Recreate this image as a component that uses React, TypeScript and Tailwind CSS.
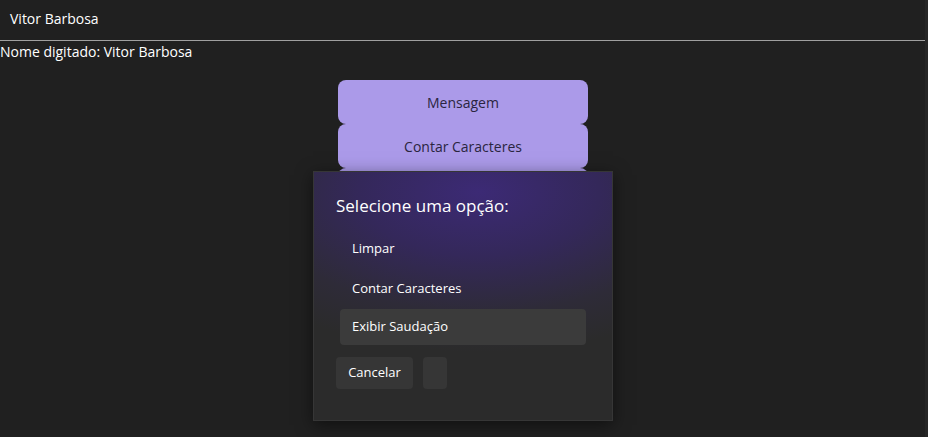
import React from "react";

export default function App() {
  const font = { fontFamily: '"Open Sans", "Noto Sans", sans-serif' };
  return (
    <div className="relative w-[928px] h-[437px] overflow-hidden bg-[#202020] text-white" style={font}>
      <div className="flex h-[41px] w-[926px] items-center border-b border-[#a0a0a0] pb-[4px] pl-[10px] text-[14px] text-white">
        Vitor Barbosa
      </div>
      <div className="absolute right-0 top-0 h-[437px] w-[3px] bg-[#262626]" />
      <div className="h-[22px] text-[14px] leading-[22px] text-white">Nome digitado: Vitor Barbosa</div>
      <div className="mt-[17px] flex flex-col items-center">
        <div className="ml-[-2px] flex flex-col">
          <button className="h-[44px] w-[250px] rounded-[8px] bg-[#ab9ae9] text-[14px] text-[#2a2540]">Mensagem</button>
          <button className="h-[44px] w-[250px] rounded-[8px] bg-[#ab9ae9] text-[14px] text-[#2a2540]">Contar Caracteres</button>
          <div className="h-[44px] w-[250px] rounded-[8px] bg-[#ab9ae9]" />
        </div>
      </div>
      <div
        className="absolute left-[313px] top-[171px] flex h-[250px] w-[300px] flex-col border border-[#363636] px-[22px] pt-[22px] shadow-[0_4px_16px_rgba(0,0,0,0.5)]"
        style={{
          background:
            "radial-gradient(ellipse 300px 160px at 165px 20px, #3c2a75 0%, #34285a 40%, #2e2b38 75%, #2b2b2b 100%)",
        }}
      >
        <div className="text-[17px] leading-[24px] text-white">Selecione uma opção:</div>
        <div className="mt-[13px] flex flex-col pl-[4px]">
          <div className="flex h-[36px] items-center rounded-[4px] pl-[12px] text-[13px] text-white">Limpar</div>
          <div className="mt-[4px] flex h-[36px] items-center rounded-[4px] pl-[12px] text-[13px] text-white">Contar Caracteres</div>
          <div className="mt-[2px] flex h-[36px] w-[246px] items-center rounded-[4px] bg-[#3b3b3b] pl-[12px] text-[13px] text-white">Exibir Saudação</div>
        </div>
        <div className="mt-[12px] flex gap-[10px]">
          <button className="h-[32px] w-[77px] rounded-[4px] bg-[#363636] text-[13px] text-white">Cancelar</button>
          <button className="h-[32px] w-[24px] rounded-[4px] bg-[#363636]" />
        </div>
      </div>
    </div>
  );
}
